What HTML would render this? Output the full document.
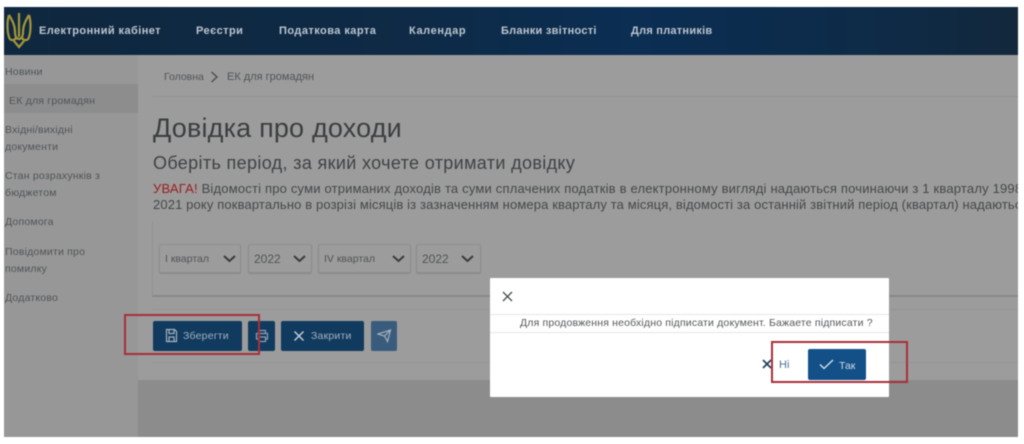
<!DOCTYPE html>
<html lang="uk"><head><meta charset="utf-8"><title>Довідка про доходи</title>
<style>
html,body{margin:0;padding:0;width:1024px;height:444px;overflow:hidden;background:#fff}
body{position:relative;font-family:"Liberation Sans",sans-serif}
#w{position:absolute;left:0;top:0;width:1024px;height:444px;overflow:hidden;filter:blur(.4px)}
.a{position:absolute}
.t{position:absolute;white-space:nowrap;line-height:1}
.n{color:#bcc5ce;font-weight:bold;font-size:11px;top:25.5px}
.s{color:#4f5458;font-size:10.5px;left:5px;letter-spacing:.2px}
.sel{position:absolute;top:244px;height:29px;border:1px solid #8e8e8e;box-sizing:border-box;border-radius:2px;box-shadow:0 1px 1px #8a8a8a}
.sel span{position:absolute;left:5px;top:8px;font-size:10.5px;color:#505356;white-space:nowrap;line-height:1.2}
.sel svg{position:absolute;top:9px}
.b{position:absolute;top:321px;height:30px;background:#113a5f;border-radius:2px}
.bt{position:absolute;white-space:nowrap;color:#a3b1be;font-size:10.5px;top:10px;line-height:1;letter-spacing:.2px}
</style></head><body><div id="w">
<div class="a" style="left:4px;top:7px;width:1014px;height:430px;background:#9c9c9c"></div>
<div class="a" style="left:4px;top:7px;width:1014px;height:48px;background:linear-gradient(90deg,#10283f 0,#0e2a46 40%,#0b2e53 62%,#0e2b48 85%,#13283c 100%)"></div>
<svg class="a" style="left:6px;top:12px" width="26" height="37" viewBox="0 0 26 37" fill="none" stroke="#a3953a" stroke-width="2.2"><path d="M13 1v24M3 3c-2 6-2 16 0 22 1 4 5 4 7 1M23 3c2 6 2 16 0 22-1 4-5 4-7 1M3 3c3 5 6 10 6 17M23 3c-3 5-6 10-6 17M9 20c0 5 2 7 4 7s4-2 4-7M8 29l5 6 5-6"/></svg>
<div class="t n" style="left:39px;letter-spacing:.42px">Електронний кабінет</div>
<div class="t n" style="left:196px;letter-spacing:.45px">Реєстри</div>
<div class="t n" style="left:279px;letter-spacing:.45px">Податкова карта</div>
<div class="t n" style="left:409px;letter-spacing:.6px">Календар</div>
<div class="t n" style="left:501px;letter-spacing:.27px">Бланки звітності</div>
<div class="t n" style="left:631px;letter-spacing:.25px">Для платників</div>

<div class="a" style="left:4px;top:55px;width:134px;height:382px;background:#979797"></div>
<div class="a" style="left:4px;top:84px;width:134px;height:29px;background:#8d8d8d"></div>
<div class="t s" style="top:66.500px">Новини</div>
<div class="t s" style="top:95.500px;left:9px">ЕК для громадян</div>
<div class="t s" style="top:124.500px">Вхідні/вихідні</div>
<div class="t s" style="top:141.500px">документи</div>
<div class="t s" style="top:170.500px">Стан розрахунків з</div>
<div class="t s" style="top:187.500px">бюджетом</div>
<div class="t s" style="top:216.500px">Допомога</div>
<div class="t s" style="top:246.500px">Повідомити про</div>
<div class="t s" style="top:263.500px">помилку</div>
<div class="t s" style="top:292.500px">Додатково</div>

<div class="a" style="left:138px;top:380px;width:880px;height:57px;background:#8c8c8c"></div>
<div class="t" style="left:164px;top:72px;font-size:10.500px;color:#505458">Головна</div>
<svg class="a" style="left:210px;top:71px" width="9" height="12" viewBox="0 0 9 12" fill="none" stroke="#4c5054" stroke-width="1.500"><path d="M1.500 1l5.500 5-5.500 5"/></svg>
<div class="t" style="left:227px;top:72px;font-size:11px;color:#505458">ЕК для громадян</div>
<div class="a" style="left:152px;top:96px;width:866px;height:1px;background:#929292"></div>
<div class="t" style="left:153px;top:115px;font-size:27px;color:#3b3e40;letter-spacing:.18px">Довідка про доходи</div>
<div class="t" style="left:153px;top:154px;font-size:18px;color:#3f4245;letter-spacing:.35px">Оберіть період, за який хочете отримати довідку</div>
<div class="t" style="left:153px;top:182px;font-size:13px;color:#44474a;letter-spacing:.19px"><span style="color:#9a1f22">УВАГА!</span> Відомості про суми отриманих доходів та суми сплачених податків в електронному вигляді надаються починаючи з 1 кварталу 1998</div>
<div class="t" style="left:153px;top:198px;font-size:13px;color:#44474a;letter-spacing:.13px">2021 року поквартально в розрізі місяців із зазначенням номера кварталу та місяця, відомості за останній звітний період (квартал) надаютьс</div>
<div class="a" style="left:1018px;top:7px;width:6px;height:437px;background:#fff"></div>

<div class="a" style="left:152px;top:222px;width:866px;height:75px;border-left:1px solid #929292;border-bottom:2px solid #878787;box-sizing:border-box"></div>
<div class="sel" style="left:159px;width:82px"><span>І квартал</span><svg style="left:62px" width="15" height="10" viewBox="0 0 15 10" fill="none" stroke="#3a3d40" stroke-width="2.100"><path d="M2 2l5.500 5 5.500-5"/></svg></div>
<div class="sel" style="left:248px;width:64px"><span style="font-size:12px;top:7px">2022</span><svg style="left:43px" width="15" height="10" viewBox="0 0 15 10" fill="none" stroke="#3a3d40" stroke-width="2.100"><path d="M2 2l5.500 5 5.500-5"/></svg></div>
<div class="sel" style="left:318px;width:93px"><span>IV квартал</span><svg style="left:72px" width="15" height="10" viewBox="0 0 15 10" fill="none" stroke="#3a3d40" stroke-width="2.100"><path d="M2 2l5.500 5 5.500-5"/></svg></div>
<div class="sel" style="left:416px;width:65px"><span style="font-size:12px;top:7px">2022</span><svg style="left:43px" width="15" height="10" viewBox="0 0 15 10" fill="none" stroke="#3a3d40" stroke-width="2.100"><path d="M2 2l5.500 5 5.500-5"/></svg></div>
<div class="a" style="left:152px;top:309px;width:866px;height:1px;background:#949494"></div>
<div class="a" style="left:152px;top:362px;width:866px;height:1px;background:#949494"></div>

<div class="b" style="left:153px;width:89px"><svg class="a" style="left:12px;top:7px" width="13" height="15" viewBox="0 0 13 15" fill="none" stroke="#a3b1be" stroke-width="1.200"><path d="M1.500 1.500h8l2 2v10h-10zM4 1.500v4h5v-4M4 13.500v-4.500h5v4.500"/></svg><span class="bt" style="left:30px">Зберегти</span></div>
<div class="b" style="left:248px;width:27px"><svg class="a" style="left:7px;top:8px" width="14" height="14" viewBox="0 0 14 14" fill="none" stroke="#8fa0b0" stroke-width="1.200"><path d="M3.500 4V1.500h7V4M3.500 10H1.500V4.500h11V10h-2M3.500 8h7v4.500h-7z"/></svg></div>
<div class="b" style="left:281px;width:83px"><svg class="a" style="left:12px;top:9px" width="12" height="12" viewBox="0 0 12 12" fill="none" stroke="#c2ccd6" stroke-width="1.500"><path d="M1.500 1.500l9 9M10.500 1.500l-9 9"/></svg><span class="bt" style="left:30px">Закрити</span></div>
<div class="b" style="left:371px;width:26px;background:#3a5c7c"><svg class="a" style="left:6px;top:8px" width="15" height="14" viewBox="0 0 15 14" fill="none" stroke="#a3b1be" stroke-width="1.200"><path d="M1 5l12.500-4-3 11.500-3-5.500zM7.500 7l6-6"/></svg></div>
<div class="a" style="left:124px;top:314px;width:136px;height:41px;border:2px solid #a82f38;box-sizing:border-box"></div>

<div class="a" style="left:490px;top:278px;width:399px;height:119px;background:#fff;border-radius:1px"></div>
<svg class="a" style="left:502px;top:291px" width="11" height="11" viewBox="0 0 11 11" fill="none" stroke="#44484c" stroke-width="1.300"><path d="M1 1l9 9M10 1l-9 9"/></svg>
<div class="a" style="left:490px;top:314px;width:399px;height:1px;background:#e6e6e6"></div>
<div class="a" style="left:490px;top:332px;width:399px;height:1px;background:#e6e6e6"></div>
<div class="t" style="left:520px;top:318px;font-size:10.500px;color:#55585b;letter-spacing:.17px">Для продовження необхідно підписати документ. Бажаете підписати ?</div>
<svg class="a" style="left:762px;top:359px" width="10" height="10" viewBox="0 0 10 10" fill="none" stroke="#22405f" stroke-width="1.700"><path d="M1 1l8 8M9 1l-8 8"/></svg>
<div class="t" style="left:779px;top:360px;font-size:11px;color:#4f7190">Ні</div>
<div class="a" style="left:808px;top:349px;width:58px;height:31px;background:#135088;border-radius:2px"></div>
<svg class="a" style="left:819px;top:359px" width="15" height="11" viewBox="0 0 15 11" fill="none" stroke="#dbe5ee" stroke-width="1.300"><path d="M1 5.500l4 4 9-8.500"/></svg>
<div class="t" style="left:839px;top:361px;font-size:10.500px;color:#cfdbe6">Так</div>
<div class="a" style="left:771px;top:341px;width:137px;height:42px;border:2px solid #a82f38;box-sizing:border-box"></div>
</div></body></html>
